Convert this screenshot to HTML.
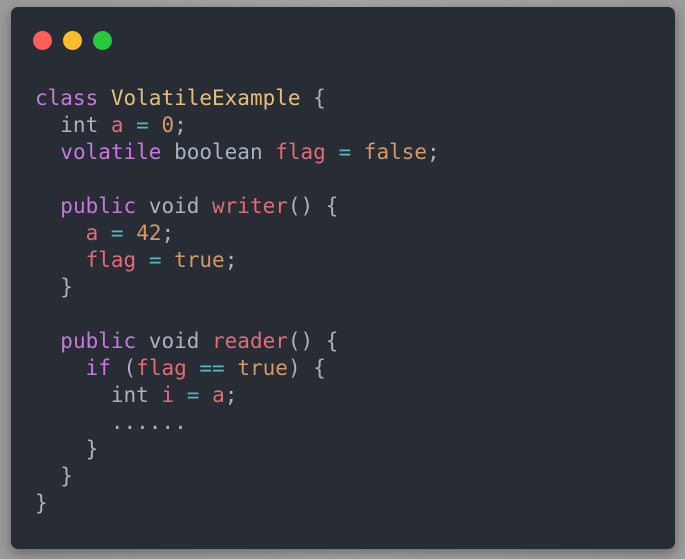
<!DOCTYPE html>
<html><head><style>
html,body{margin:0;padding:0;width:685px;height:559px;overflow:hidden;background:linear-gradient(90deg,#9a9a9a,#a6a6a6 50%,#9c9c9c);}
.win{position:absolute;left:11px;top:7px;width:664px;height:542px;background:#282c35;border-radius:7px;box-shadow:0 4px 12px rgba(0,0,0,.35);}
.dot{position:absolute;top:24px;width:19px;height:19px;border-radius:50%;}
pre{position:absolute;left:24px;top:78px;margin:0;font-family:"DejaVu Sans Mono","Liberation Mono",monospace;font-size:21px;line-height:27px;color:#abb2bf;}
.k{color:#c678dd}.y{color:#e5c07b}.r{color:#e06c75}.c{color:#56b6c2}.o{color:#d19a66}
</style></head><body>
<div class="win">
<div class="dot" style="left:22px;background:#ff5f56"></div>
<div class="dot" style="left:52px;background:#ffbd2e"></div>
<div class="dot" style="left:82px;background:#27c93f"></div>
<pre><span class="k">class</span> <span class="y">VolatileExample</span> {
  int <span class="r">a</span> <span class="c">=</span> <span class="o">0</span>;
  <span class="k">volatile</span> boolean <span class="r">flag</span> <span class="c">=</span> <span class="o">false</span>;

  <span class="k">public</span> void <span class="r">writer</span>() {
    <span class="r">a</span> <span class="c">=</span> <span class="o">42</span>;
    <span class="r">flag</span> <span class="c">=</span> <span class="o">true</span>;
  }

  <span class="k">public</span> void <span class="r">reader</span>() {
    <span class="k">if</span> (<span class="r">flag</span> <span class="c">==</span> <span class="o">true</span>) {
      int <span class="r">i</span> <span class="c">=</span> <span class="r">a</span>;
      ......
    }
  }
}</pre>
</div>
</body></html>
